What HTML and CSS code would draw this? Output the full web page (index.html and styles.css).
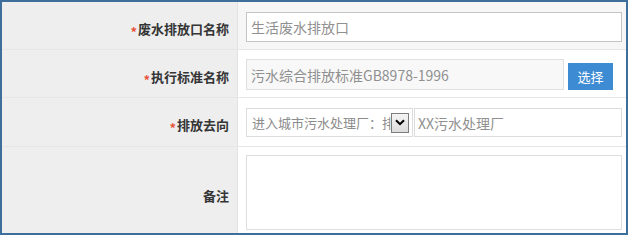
FILE: index.html
```html
<!DOCTYPE html>
<html lang="zh-CN">
<head>
<meta charset="utf-8">
<title>排放口信息</title>
<link rel="stylesheet" href="styles.css">
</head>
<body>
<div class="panel">
  <div class="row row-active">
    <div class="label"><span class="req">*</span>废水排放口名称</div>
    <div class="value value-r1"><input class="field field-focus" type="text" value="生活废水排放口"></div>
  </div>
  <div class="row">
    <div class="label"><span class="req">*</span>执行标准名称</div>
    <div class="value value-r2">
      <input class="field field-readonly field-std" type="text" value="污水综合排放标准GB8978-1996" readonly>
      <button class="btn" type="button">选择</button>
    </div>
  </div>
  <div class="row">
    <div class="label"><span class="req">*</span>排放去向</div>
    <div class="value value-r3">
      <div class="select">
        <span class="select-text">进入城市污水处理厂：排</span>
        <span class="select-btn"><svg width="10" height="7" viewBox="0 0 10 7"><path d="M1 1.2 L5 5.2 L9 1.2" fill="none" stroke="#000" stroke-width="2"/></svg></span>
      </div>
      <input class="field field-dest" type="text" value="XX污水处理厂">
    </div>
  </div>
  <div class="row row-last">
    <div class="label">备注</div>
    <div class="value value-r4"><textarea class="memo"></textarea></div>
  </div>
</div>
</body>
</html>
```
FILE: styles.css
```css
* { box-sizing: border-box; }
html, body { margin: 0; padding: 0; background: #fff; }
body { font-family: "Noto Sans CJK SC", "Noto Sans", sans-serif; }

.panel {
  width: 628px;
  height: 235px;
  border: 2px solid #3e6e9c;
  overflow: hidden;
  background: #fff;
}

.row {
  display: flex;
  border-bottom: 1px solid #e6e6e6;
}
.row-last { border-bottom: none; }

.label {
  flex: 0 0 236px;
  display: flex;
  align-items: center;
  justify-content: flex-end;
  padding: 5px 8px 0 0;
  background: #eeeeee;
  border-right: 1px solid #e2e2e2;
  font-size: 13px;
  font-weight: bold;
  color: #353535;
  white-space: nowrap;
}
.req {
  display: inline-block;
  color: #e8513c;
  font-size: 13px;
  font-weight: bold;
  margin-right: 1px;
  transform: translateY(3px);
}

.value {
  flex: 1;
  display: flex;
  align-items: flex-start;
  padding: 9px 4px 7px 8px;
  background: #fff;
}
.row-active .value { background: #f6f6f6; }
.value-r1 { padding-top: 10px; padding-bottom: 7px; }
.value-r2 { padding-top: 9px; padding-bottom: 7px; }
.value-r3 { padding-top: 10px; padding-bottom: 9px; gap: 1px; }
.value-r4 { padding-top: 8px; padding-bottom: 8px; }

.field {
  height: 30px;
  border: 1px solid #dcdcdc;
  background: #fff;
  font-family: inherit;
  font-size: 14px;
  color: #909090;
  padding: 0 0 0 4px;
  margin: 0;
  outline: none;
}
.value-r1 .field { flex: 1; }
.field-focus { border-color: #c4c4c4; }
.field-std { flex: 1; height: 31px; }
.field-readonly { background: #f8f8f8; border-color: #e0e0e0; }
.field-dest { flex: 1; height: 29px; padding-left: 3px; }

.btn {
  flex: 0 0 45px;
  height: 27px;
  margin: 4px 9px 0 4px;
  border: none;
  background: #3d8bd3;
  color: #fff;
  font-family: inherit;
  font-size: 13px;
  padding: 0;
}

.select {
  flex: 0 0 167px;
  height: 29px;
  display: flex;
  align-items: center;
  border: 1px solid #dcdcdc;
  background: #fff;
  overflow: hidden;
}
.select-text {
  flex: 1;
  overflow: hidden;
  white-space: nowrap;
  font-size: 13px;
  color: #8c8c8c;
  padding-left: 5px;
}
.select-btn {
  flex: 0 0 18px;
  height: 20px;
  margin-right: 3px;
  display: flex;
  align-items: center;
  justify-content: center;
  border: 1px solid #7d7d7d;
  background: linear-gradient(#f4f4f4, #dcdcdc);
}

.memo {
  flex: 1;
  height: 75px;
  border: 1px solid #dedede;
  background: #fff;
  resize: none;
  margin: 0;
  padding: 4px;
  font-family: inherit;
  outline: none;
}
```
